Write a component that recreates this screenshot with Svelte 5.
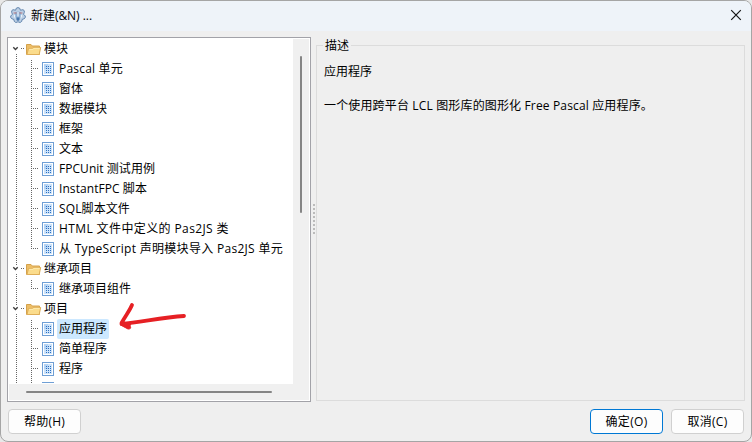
<script>
  const rows = [
    { label: '模块', folder: true, width: 24 },
    { label: 'Pascal 单元', width: 64 },
    { label: '窗体', width: 24 },
    { label: '数据模块', width: 48 },
    { label: '框架', width: 24 },
    { label: '文本', width: 24 },
    { label: 'FPCUnit 测试用例', width: 96 },
    { label: 'InstantFPC 脚本', width: 88 },
    { label: 'SQL脚本文件', width: 71 },
    { label: 'HTML 文件中定义的 Pas2JS 类', width: 170 },
    { label: '从 TypeScript 声明模块导入 Pas2JS 单元', width: 224, last: true },
    { label: '继承项目', folder: true, width: 48 },
    { label: '继承项目组件', width: 72, last: true },
    { label: '项目', folder: true, width: 24 },
    { label: '应用程序', selected: true, width: 48 },
    { label: '简单程序', width: 48 },
    { label: '程序', width: 24 },
    { label: '控制台程序', width: 60 }
  ];
  const grips = [0, 1, 2, 3, 4, 5, 6, 7];
  const dots = [0, 1, 2, 3, 4, 5, 6, 7, 8, 9, 10, 11];

  // Spread the glyphs of a label evenly over its column width.
  function fit(node, width) {
    const natural = node.getBoundingClientRect().width;
    const gap = (width - natural) / Array.from(node.textContent).length;
    node.style.letterSpacing = `${gap}px`;
  }
</script>

<div class="desktop">
  <div class="window">
    <header>
      <svg class="logo" width="16" height="17" viewBox="0 0 16 17">
        <path d="M6.3 1.2Q8 0 9.7 1.2L10.4 3.2 13 2.7Q14.8 3.3 14.3 5.3L13.6 7.3 15.3 9Q15.8 11 14 11.8L12.2 12.4 11.7 14.4Q10.4 16 8.8 15.2L8 14.5 7.2 15.2Q5.6 16 4.3 14.4L3.8 12.4 2 11.8Q.2 11 .7 9L2.4 7.3 1.7 5.3Q1.2 3.3 3 2.7L5.6 3.2Z" fill="#bdd0e5" stroke="#557aa6" stroke-width=".9" />
        <path d="M5.2 5.2 8 4.2 10.9 5.2 11 9.5 8 13.4 5 9.5Z" fill="#8fb0d3" />
        <path d="M3.6 6h3M9.4 6h3" stroke="#b8757a" />
        <path d="M8 4.8v4.7M4.6 8v2.5M11.4 8v2.5" fill="none" stroke="#e9f2fb" stroke-width="1.3" />
        <path d="M6.5 10.5h3v2.4L8 14 6.5 12.9Z" fill="#4877ad" />
      </svg>
      <span class="title"><span use:fit={61}>新建(&amp;N) ...</span></span>
      <svg class="close" width="12" height="12" viewBox="0 0 12 12"><path d="M1.2 1.2 10.8 10.8M10.8 1.2 1.2 10.8" stroke="#151515" stroke-width="1.2" /></svg>
    </header>

    <main>
      <section class="tree">
        <div class="upper">
          <div class="list">
            {#each rows as row, i}
              <div class="row">
                <svg class="lead" width={row.folder ? 33 : 48} height="20" shape-rendering="crispEdges">
                  <path d={i === 0 ? 'M7.5 15V20' : row.folder ? 'M7.5 1V7M7.5 15V20' : 'M7.5 1V20'} class="dot" />
                  {#if row.folder}
                    <path d="M12 9.5H15" class="dot" />
                    <path d="M4.3 8.2 6.5 10.4 8.7 8.2" fill="none" stroke="#3c3c3c" stroke-width="1.4" shape-rendering="auto" />
                    <g shape-rendering="auto">
                      <path d="M17.5 15.4V5.5h4.5l1.3 1.5h7.2v8.4Z" fill="#edbd66" stroke="#d4a24c" />
                      <path d="M18 15.5 19.5 9.5h4l1-1h7.2l-1.5 7Z" fill="#fbdc8c" stroke="#dfae58" />
                      <path d="M20.3 10.3h3.8l1-1h5.4" fill="none" stroke="#fff1be" stroke-width=".8" />
                    </g>
                  {:else}
                    <path d={row.last ? 'M22.5 1V10' : 'M22.5 1V20'} class="dot" />
                    <path d="M24 9.5H29" class="dot" />
                    <rect x="33.5" y="3.5" width="11" height="13" fill="#fff" stroke="#6f9fd5" />
                    <rect x="35" y="5" width="8" height="10" fill="#cce3fa" />
                    <rect x="35" y="5" width="4" height="5" fill="#b4d3f4" />
                    {#each dots as d}
                      <rect x={37 + (d % 3) * 2} y={7 + Math.floor(d / 3) * 2} width="1" height="1" fill="#2d6fc0" />
                    {/each}
                  {/if}
                </svg>
                <span class="label" class:selected={row.selected}><span use:fit={row.width}>{row.label}</span></span>
              </div>
            {/each}
          </div>
          <div class="vbar"><i></i></div>
        </div>
        <div class="hbar"><i></i></div>
      </section>

      <div class="splitter">
        {#each grips as g}<i></i>{/each}
      </div>

      <fieldset>
        <legend><span use:fit={24}>描述</span></legend>
        <p><span use:fit={48}>应用程序</span></p>
        <p class="detail"><span use:fit={329}>一个使用跨平台 LCL 图形库的图形化 Free Pascal 应用程序。</span></p>
      </fieldset>
    </main>

    <footer>
      <button><span use:fit={41}>帮助(H)</span></button>
      <button class="ok"><span use:fit={42}>确定(O)</span></button>
      <button><span use:fit={40}>取消(C)</span></button>
    </footer>

    <svg class="arrow" width="70" height="32" viewBox="0 0 70 32">
      <path d="M14 5C12 10 8 15 3.5 23M3.5 24C24 22 44 17.500 66 16" fill="none" stroke="#e62024" stroke-width="3.8" stroke-linecap="round" />
      <path d="M3 22 2.5 25 10 29Q14 29 12 26L13 23Z" fill="#e62024" stroke="#e62024" stroke-linejoin="round" />
    </svg>
  </div>
</div>

<style>
  .desktop { width: 752px; height: 442px; background: #e8e8e8; overflow: hidden; }
  .window {
    position: relative; box-sizing: border-box; width: 752px; height: 442px;
    display: flex; flex-direction: column; overflow: hidden;
    background: #efefef; border: 1px solid #a5a5a5; border-radius: 8px;
    font: 12px/20px "Open Sans", "Noto Sans CJK SC", sans-serif; color: #000;
  }
  span { white-space: pre; }
  header { height: 30px; flex: none; display: flex; align-items: center; background: #eef3f9; padding: 0 9px 0 8px; }
  .logo { margin-top: -2px; margin-left: 1px; flex: none; }
  .title { margin-left: 5px; flex: 1; }
  .close { flex: none; margin-top: -2px; }
  main { display: flex; height: 365px; flex: none; padding: 6px 6px 0; }
  .tree { box-sizing: border-box; width: 304px; height: 365px; flex: none; border: 1px solid #a2a2a8; padding: 1px; background: #fff; }
  .upper { display: flex; height: 345px; }
  .list { width: 284px; height: 344px; overflow: hidden; }
  .row { display: flex; height: 20px; }
  .lead { flex: none; display: block; }
  .dot { stroke: #666; stroke-dasharray: 1 1; fill: none; }
  .label { height: 20px; padding: 0 2px; }
  .label > span { display: inline-block; }
  .row:last-child .label { padding-top: 1px; }
  .selected { background: #cce8ff; border-radius: 2px; }
  .vbar { background: #f0f0f0; padding-top: 17px; box-sizing: border-box; flex: 1; }
  .vbar i { display: block; margin-left: 7px; width: 2px; height: 157px; border-radius: 1px; background: #858585; }
  .hbar { height: 16px; background: #f0f0f0; padding: 7px 0 0 17px; box-sizing: border-box; }
  .hbar i { display: block; width: 246px; height: 2px; border-radius: 1px; background: #858585; }
  .splitter { width: 5px; flex: none; display: flex; flex-direction: column; align-items: center; gap: 2px; padding-top: 167px; }
  .splitter i { width: 2px; height: 2px; background: #bbb; flex: none; }
  fieldset { box-sizing: border-box; width: 430px; height: 365px; min-width: 0; margin: -1px 0 0; padding: 0; border: 1px solid #dcdcdc; }
  legend { line-height: 20px; height: 18px; margin: 0 0 0 6px; padding: 0 2px; background: #efefef; }
  legend span, p span { display: inline-block; }
  p { margin: 8px 0 0 7px; line-height: 20px; }
  .detail { margin-top: 14px; }
  footer { display: flex; gap: 8px; padding: 7px 7px 0; flex: none; }
  button {
    box-sizing: border-box; width: 73px; height: 25px; padding: 0; font: inherit; color: #000;
    background: #fdfdfd; border: 1px solid #d0d0d0; border-radius: 4px; line-height: 22px;
  }
  button span { display: inline-block; }
  .ok { margin-left: auto; border-color: #0078d4; }
  .arrow { position: absolute; left: 117px; top: 299px; }
</style>
